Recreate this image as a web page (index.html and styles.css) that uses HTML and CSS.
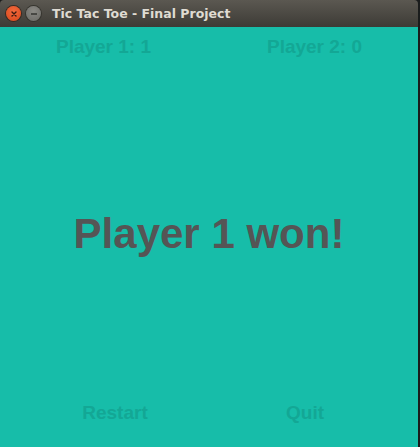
FILE: index.html
```html
<!DOCTYPE html>
<html>
<head>
<meta charset="utf-8">
<link rel="stylesheet" href="styles.css">
</head>
<body>
<div class="window">
  <div class="titlebar">
    <span class="btn close"><svg width="14" height="14" viewBox="0 0 14 14"><path d="M5 5 L9 9 M9 5 L5 9" stroke="#3b1a10" stroke-width="1.4" stroke-linecap="round"/></svg></span>
    <span class="btn min"><svg width="14" height="14" viewBox="0 0 14 14"><path d="M4 7 H10" stroke="#2e2e2c" stroke-width="1.4"/></svg></span>
    <span class="title">Tic Tac Toe - Final Project</span>
  </div>
  <div class="game">
    <div class="scores">
      <div class="cell">Player 1: 1</div>
      <div class="cell">Player 2: 0</div>
    </div>
    <div class="message">Player 1 won!</div>
    <div class="actions">
      <div class="cell">Restart</div>
      <div class="cell">Quit</div>
    </div>
  </div>
</div>
</body>
</html>
```
FILE: styles.css
```css
html, body {
  margin: 0;
  padding: 0;
  background: #1a1c1c;
}
.window {
  width: 418px;
  height: 447px;
  display: flex;
  flex-direction: column;
}
.titlebar {
  height: 27px;
  background: linear-gradient(#5b5851, #3d3b36);
  border-radius: 4px 4px 0 0;
  display: flex;
  align-items: center;
  padding-left: 6px;
  box-sizing: border-box;
}
.btn {
  width: 15px;
  height: 15px;
  border-radius: 50%;
  display: flex;
  align-items: center;
  justify-content: center;
  margin-right: 5px;
}
.btn svg { display: block; }
.close {
  background: radial-gradient(circle at 50% 35%, #f26a3d, #d8461a);
  box-shadow: 0 0 0 1px #3a2a22;
}
.min {
  background: radial-gradient(circle at 50% 35%, #8b8a85, #6a6965);
  box-shadow: 0 0 0 1px #36352f;
}
.title {
  margin-left: 6px;
  font-family: "DejaVu Sans", sans-serif;
  font-weight: bold;
  font-size: 12.5px;
  color: #dfdbd2;
}
.game {
  flex: 1;
  background: #17bda9;
  display: flex;
  flex-direction: column;
  font-family: "Liberation Sans", Arial, sans-serif;
  font-weight: bold;
}
.scores {
  display: flex;
  padding-top: 9px;
  color: #13a795;
  font-size: 19px;
  line-height: 22px;
}
.scores .cell {
  width: 209px;
  text-align: center;
}
.scores .cell:first-child { padding-right: 4px; }
.message {
  flex: 1;
  display: flex;
  align-items: center;
  justify-content: center;
  font-size: 42px;
  color: #555555;
  padding-top: 8px;
}
.actions {
  display: flex;
  padding: 0 0 23px 20px;
  color: #13a795;
  font-size: 19px;
  line-height: 22px;
}
.actions .cell {
  width: 190px;
  text-align: center;
}
```
